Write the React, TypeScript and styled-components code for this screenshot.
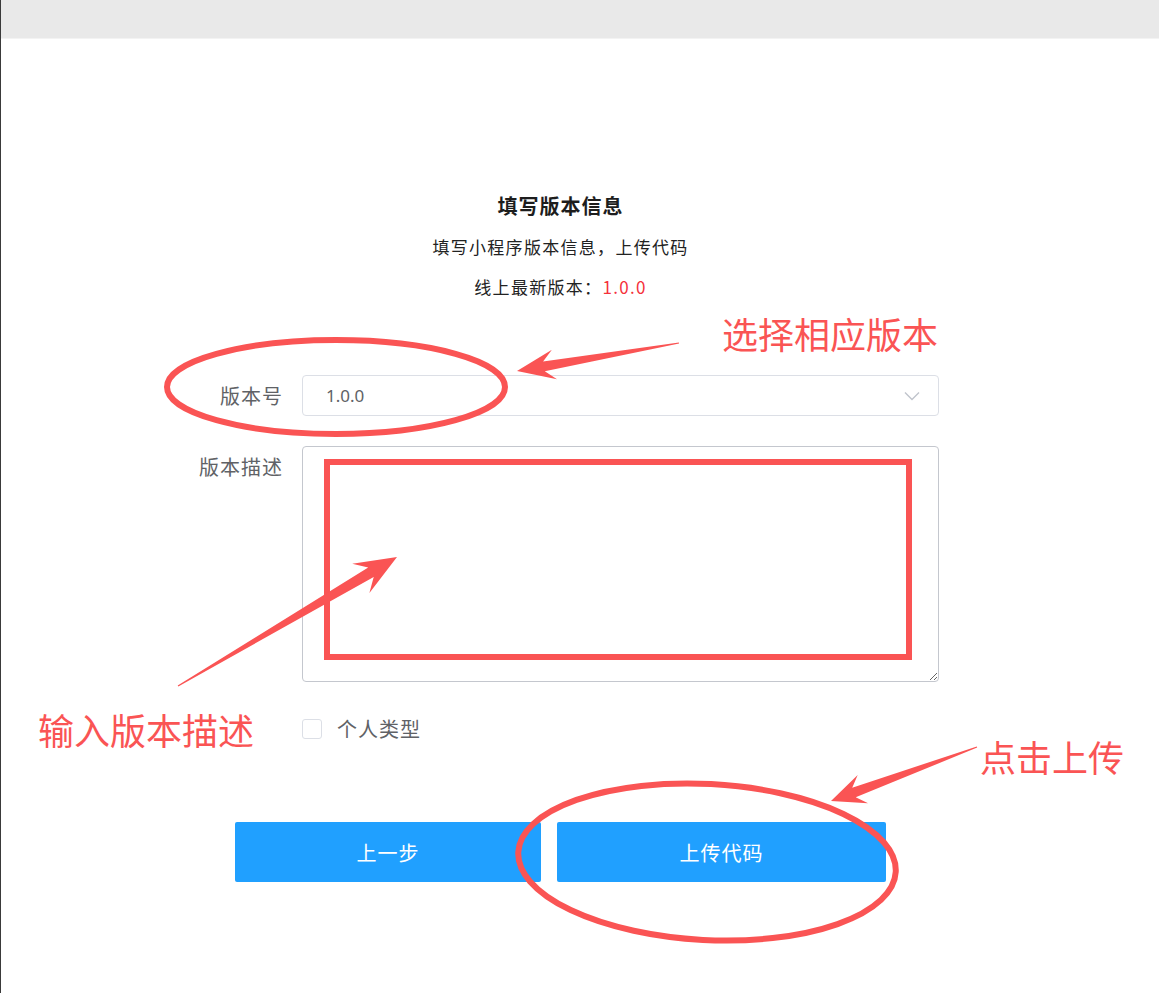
import * as React from "react";
import styled, { createGlobalStyle } from "styled-components";

const RED = "#fa5454";

const GlobalStyle = createGlobalStyle`
    html, body {
        margin: 0;
        padding: 0;
        background: #ffffff;
    }
    body {
        font-family: "Noto Sans CJK SC", "Noto Sans", sans-serif;
        color: #303133;
    }
`;

const Page = styled.div`
    position: relative;
    min-height: 993px;
    border-left: 1px solid #3a3a3a;
    box-sizing: border-box;
    overflow: hidden;
`;

const TopBar = styled.div`
    height: 38px;
    background: #e9e9e9;
    border-bottom: 1px solid #f3f3f3;
`;

const Content = styled.div`
    display: flex;
    flex-direction: column;
    align-items: center;
    padding: 153px 39px 0 0;
`;

const Title = styled.h2`
    margin: 0;
    font-size: 20px;
    line-height: 28px;
    font-weight: 700;
    letter-spacing: 1px;
    color: #1d1d1d;
`;

const SubText = styled.p`
    margin: 14px 0 0;
    font-size: 17px;
    line-height: 26px;
    letter-spacing: 1.3px;
    color: #222222;
`;

const Version = styled.span`
    color: #f5313b;
`;

const Form = styled.div`
    width: 757px;
    margin-top: 75px;
    display: flex;
    flex-direction: column;
`;

const Row = styled.div<{ $top?: boolean; $gap?: number }>`
    display: flex;
    align-items: ${(p) => (p.$top ? "flex-start" : "center")};
    margin-top: ${(p) => p.$gap ?? 0}px;
`;

const Label = styled.label`
    width: 120px;
    flex-shrink: 0;
    padding-right: 19px;
    box-sizing: border-box;
    text-align: right;
    white-space: nowrap;
    font-size: 20px;
    line-height: 41px;
    letter-spacing: 1px;
    color: #606266;
`;

const Select = styled.div`
    flex: 1;
    height: 41px;
    box-sizing: border-box;
    border: 1px solid #dcdfe6;
    border-radius: 4px;
    display: flex;
    align-items: center;
    justify-content: space-between;
    padding: 0 18px 0 23px;
    font-family: "Noto Sans", sans-serif;
    font-size: 17px;
    color: #606266;
`;

const TextArea = styled.textarea`
    flex: 1;
    height: 236px;
    box-sizing: border-box;
    border: 1px solid #c4c7ce;
    border-radius: 4px;
    resize: vertical;
    outline: none;
    padding: 8px 12px;
    font-family: inherit;
`;

const CheckRow = styled.label`
    display: flex;
    align-items: center;
    gap: 15px;
    height: 41px;
    margin: 26px 0 0 120px;
    font-size: 20px;
    letter-spacing: 1px;
    color: #606266;
`;

const Box = styled.span`
    width: 20px;
    height: 20px;
    box-sizing: border-box;
    border: 1px solid #dcdfe6;
    border-radius: 3px;
    background: #fff;
`;

const Buttons = styled.div`
    display: flex;
    gap: 16px;
    margin-top: 73px;
`;

const Button = styled.button<{ $w: number }>`
    width: ${(p) => p.$w}px;
    height: 60px;
    border: none;
    border-radius: 2px;
    background: #20a0ff;
    color: #ffffff;
    font-family: inherit;
    font-size: 20px;
    letter-spacing: 1px;
    cursor: pointer;
`;

const Overlay = styled.svg`
    position: absolute;
    top: 0;
    left: -1px;
    width: 1159px;
    height: 993px;
    pointer-events: none;
`;

const Note = styled.span<{ $x: number; $y: number }>`
    position: absolute;
    left: ${(p) => p.$x}px;
    top: ${(p) => p.$y}px;
    font-size: 36px;
    line-height: 40px;
    color: ${RED};
    white-space: nowrap;
    pointer-events: none;
`;

type Pt = [number, number];

// tapered annotation arrow, thin at the tail and barbed at the tip
const arrowPoints = (tail: Pt, tip: Pt, headLen: number, headHalf: number, shaft: number) => {
    const dx = tip[0] - tail[0];
    const dy = tip[1] - tail[1];
    const len = Math.hypot(dx, dy);
    const ux = dx / len;
    const uy = dy / len;
    const nx = -uy;
    const ny = ux;
    const at = (d: number, w: number): string =>
        `${(tip[0] - ux * d + nx * w).toFixed(1)},${(tip[1] - uy * d + ny * w).toFixed(1)}`;
    return [
        at(len, 0.6),
        at(headLen * 0.72, shaft),
        at(headLen, headHalf),
        at(0, 0),
        at(headLen, -headHalf),
        at(headLen * 0.72, -shaft),
        at(len, -0.6),
    ].join(" ");
};

const Chevron = () => (
    <svg width="16" height="10" viewBox="0 0 16 10" fill="none">
        <path d="M1 1.5 L8 8.5 L15 1.5" stroke="#c0c4cc" strokeWidth="1.4" />
    </svg>
);

export default function App() {
    return (
        <>
            <GlobalStyle />
            <Page>
                <TopBar />
                <Content>
                    <Title>填写版本信息</Title>
                    <SubText>填写小程序版本信息，上传代码</SubText>
                    <SubText>
                        线上最新版本：<Version>1.0.0</Version>
                    </SubText>
                    <Form>
                        <Row>
                            <Label>版本号</Label>
                            <Select>
                                <span>1.0.0</span>
                                <Chevron />
                            </Select>
                        </Row>
                        <Row $top $gap={30}>
                            <Label>版本描述</Label>
                            <TextArea />
                        </Row>
                        <CheckRow>
                            <Box />
                            个人类型
                        </CheckRow>
                    </Form>
                    <Buttons>
                        <Button $w={306}>上一步</Button>
                        <Button $w={329}>上传代码</Button>
                    </Buttons>
                </Content>

                <Overlay viewBox="0 0 1159 993">
                    <g fill="none" stroke={RED} strokeWidth="6">
                        <ellipse cx="336" cy="387" rx="169" ry="47" />
                        <rect x="327" y="462" width="582" height="195" />
                        <ellipse cx="707" cy="862" rx="189" ry="78" transform="rotate(3 707 862)" />
                    </g>
                    <g fill={RED}>
                        <polygon points={arrowPoints([679, 343], [517, 371], 38, 15, 5)} />
                        <polygon points={arrowPoints([178, 686], [397, 557], 42, 17, 5.5)} />
                        <polygon points={arrowPoints([977, 747], [831, 801], 34, 15, 5)} />
                    </g>
                </Overlay>
                <Note $x={721} $y={313}>选择相应版本</Note>
                <Note $x={37} $y={709}>输入版本描述</Note>
                <Note $x={979} $y={736}>点击上传</Note>
            </Page>
        </>
    );
}
